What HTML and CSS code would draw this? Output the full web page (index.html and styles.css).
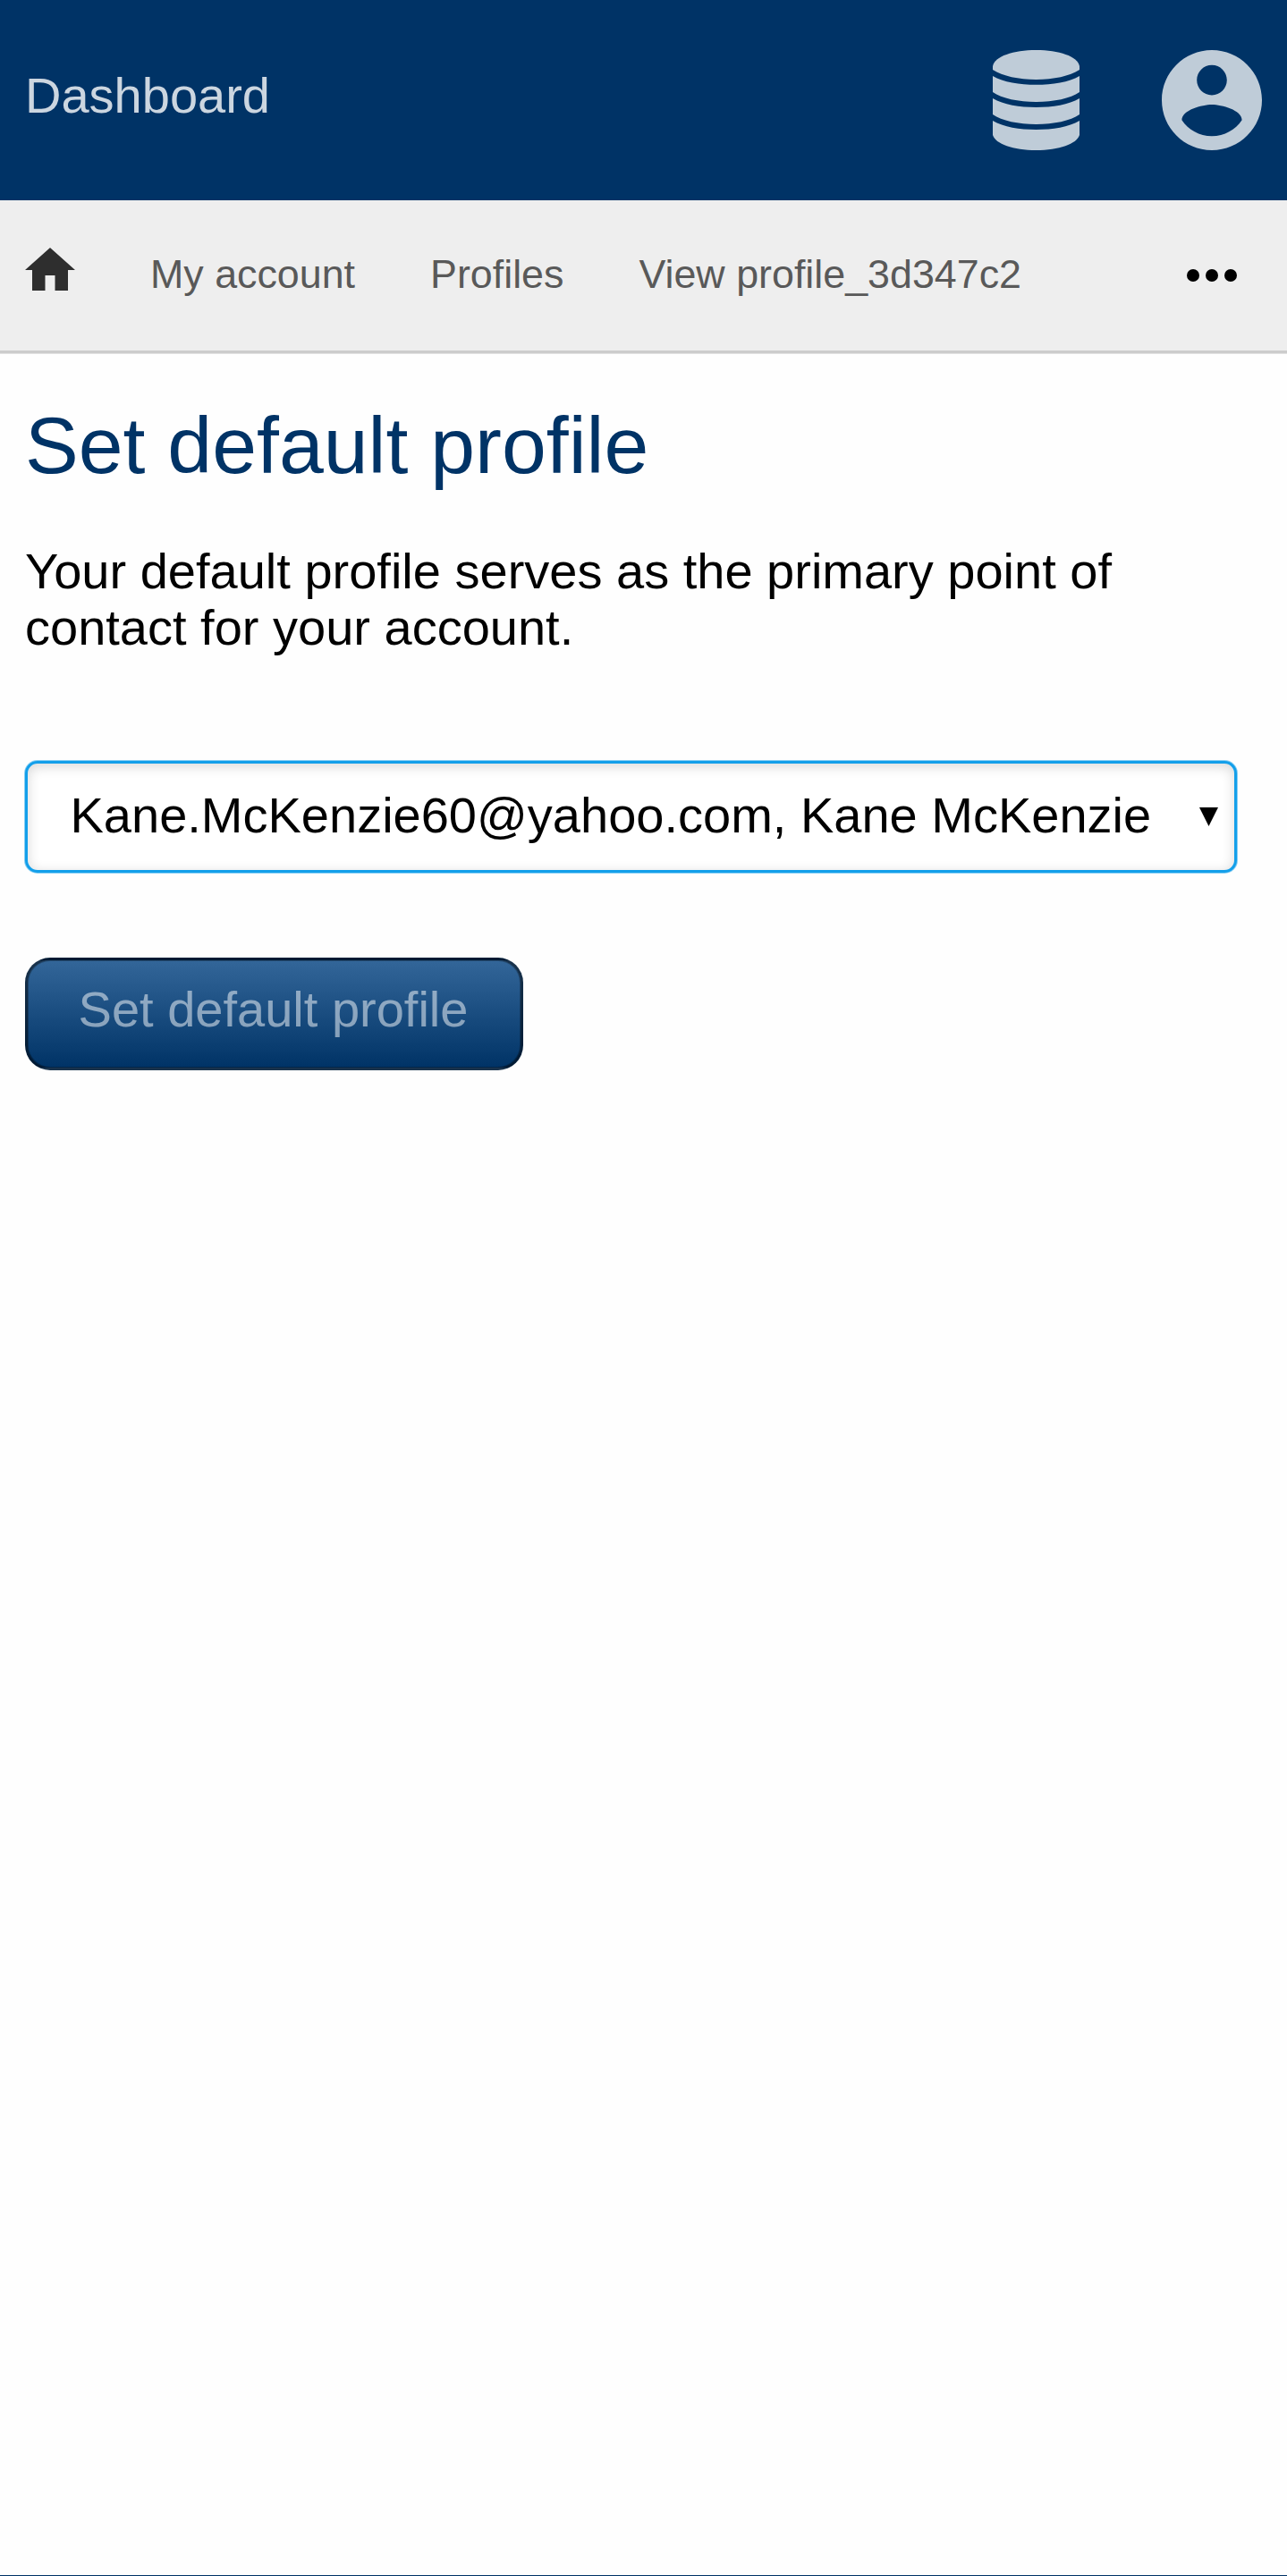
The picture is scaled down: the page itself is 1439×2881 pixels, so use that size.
FILE: index.html
```html
<!DOCTYPE html>
<html lang="en">
<head>
<meta charset="utf-8">
<title>Set default profile</title>
<link rel="stylesheet" href="styles.css">
</head>
<body>
<header class="header">
  <a class="brand">Dashboard</a>
  <div class="tools">
    <svg class="database" viewBox="0 0 97 112" aria-hidden="true">
      <path d="M0 18C2 7 23 0 48.500 0S95 7 97 18V22C86 29 68 33 48.500 33S11 29 0 22Z"/>
      <path d="M0 29C12 36 30 38.800 48.500 38.800S85 36 97 29V47C87 54 68 58 48.500 58S10 54 0 47Z"/>
      <path d="M0 54C12 61 30 64 48.500 64S85 61 97 54V72C87 79 68 83 48.500 83S10 79 0 72Z"/>
      <path d="M0 79C12 86 30 89 48.500 89S85 86 97 79V95C94 105 74 112 48.500 112S3 105 0 95Z"/>
    </svg>
    <svg class="account" viewBox="2 2 20 20" aria-hidden="true">
      <path d="M12 2C6.480 2 2 6.480 2 12s4.480 10 10 10 10-4.480 10-10S17.520 2 12 2zm0 3c1.660 0 3 1.340 3 3s-1.340 3-3 3-3-1.340-3-3 1.340-3 3-3zm0 14.200c-2.500 0-4.710-1.280-6-3.220.030-1.990 4-3.080 6-3.080 1.990 0 5.970 1.090 6 3.080-1.290 1.940-3.500 3.220-6 3.220z"/>
    </svg>
  </div>
</header>
<nav class="crumbs">
  <svg class="home" viewBox="0 0 56 48" aria-hidden="true"><path d="M28 0L56 25H48V48H33.500V31H22.500V48H8V25H0Z"/></svg>
  <a>My account</a>
  <a>Profiles</a>
  <a>View profile_3d347c2</a>
  <svg class="more" viewBox="0 0 56 14" aria-hidden="true"><circle cx="7" cy="7" r="7"/><circle cx="28" cy="7" r="7"/><circle cx="49" cy="7" r="7"/></svg>
</nav>
<main class="content">
  <h1>Set default profile</h1>
  <p>Your default profile serves as the primary point of contact for your account.</p>
  <div class="select" role="combobox" aria-expanded="false" tabindex="0">
    <span>Kane.McKenzie60@yahoo.com, Kane McKenzie</span>
    <svg class="arrow" viewBox="0 0 21 21" aria-hidden="true"><path d="M0 0H21L10.500 21Z"/></svg>
  </div>
  <button class="submit" disabled>Set default profile</button>
</main>
<footer class="footer"></footer>
</body>
</html>
```
FILE: styles.css
```css
* {
  box-sizing: border-box;
}

body {
  display: flex;
  flex-direction: column;
  height: 2881px;
  margin: 0;
  background: #fefefe;
  color: #000;
  font: 56px/63px "Liberation Sans", Arial, sans-serif;
}

.header {
  display: flex;
  justify-content: space-between;
  flex: none;
  height: 224px;
  padding: 56px 28px 0;
  background: #003366;
}

.brand {
  padding-top: 19px;
  color: #ccd6e0;
}

.tools {
  display: flex;
  gap: 92px;
  height: 112px;
  fill: #bfccd8;
}

.database {
  width: 97px;
  height: 112px;
}

.account {
  width: 112px;
  height: 112px;
}

.crumbs {
  display: flex;
  align-items: flex-start;
  gap: 84px;
  flex: none;
  height: 171px;
  margin-bottom: 1px;
  padding: 53px 56px 0 28px;
  border-bottom: 3px solid #ccc;
  background: #eee;
  box-shadow: 0 1px #e2e2e2;
  color: #595959;
  font-size: 44.8px;
  line-height: 59px;
}

.home {
  width: 56px;
  height: 48px;
  fill: #2e2e2e;
}

.more {
  width: 56px;
  height: 14px;
  margin: 24px 0 0 auto;
}

.content {
  flex: 1;
  padding: 52px 56px 0 28px;
}

h1 {
  margin: 0;
  color: #003366;
  font-size: 89.6px;
  font-weight: 400;
  line-height: 100px;
}

p {
  margin: 59px 0 0;
}

.select {
  display: flex;
  align-items: center;
  justify-content: space-between;
  height: 125px;
  margin-top: 118px;
  padding: 0 18px 4px 47.5px;
  border: 3px solid #139fea;
  border-radius: 14px;
  background: #fff;
  box-shadow: 0 0 0 1px rgba(19, 159, 234, .5), inset 0 3px 14px rgba(0, 0, 0, .16);
  white-space: nowrap;
}

.arrow {
  width: 21px;
  height: 21px;
  margin-top: 4px;
}

.submit {
  display: block;
  width: 557px;
  height: 126px;
  margin: 95px 0 0;
  padding: 0 2px 11px 0;
  border: 3px solid rgba(0, 0, 0, .5);
  border-radius: 28px;
  background: linear-gradient(#336699, #003366);
  box-shadow: inset 0 0 0 1px rgba(0, 0, 0, .25);
  color: rgba(255, 255, 255, .5);
  font: inherit;
}

.footer {
  flex: none;
  height: 1px;
  background: #003366;
}
```
